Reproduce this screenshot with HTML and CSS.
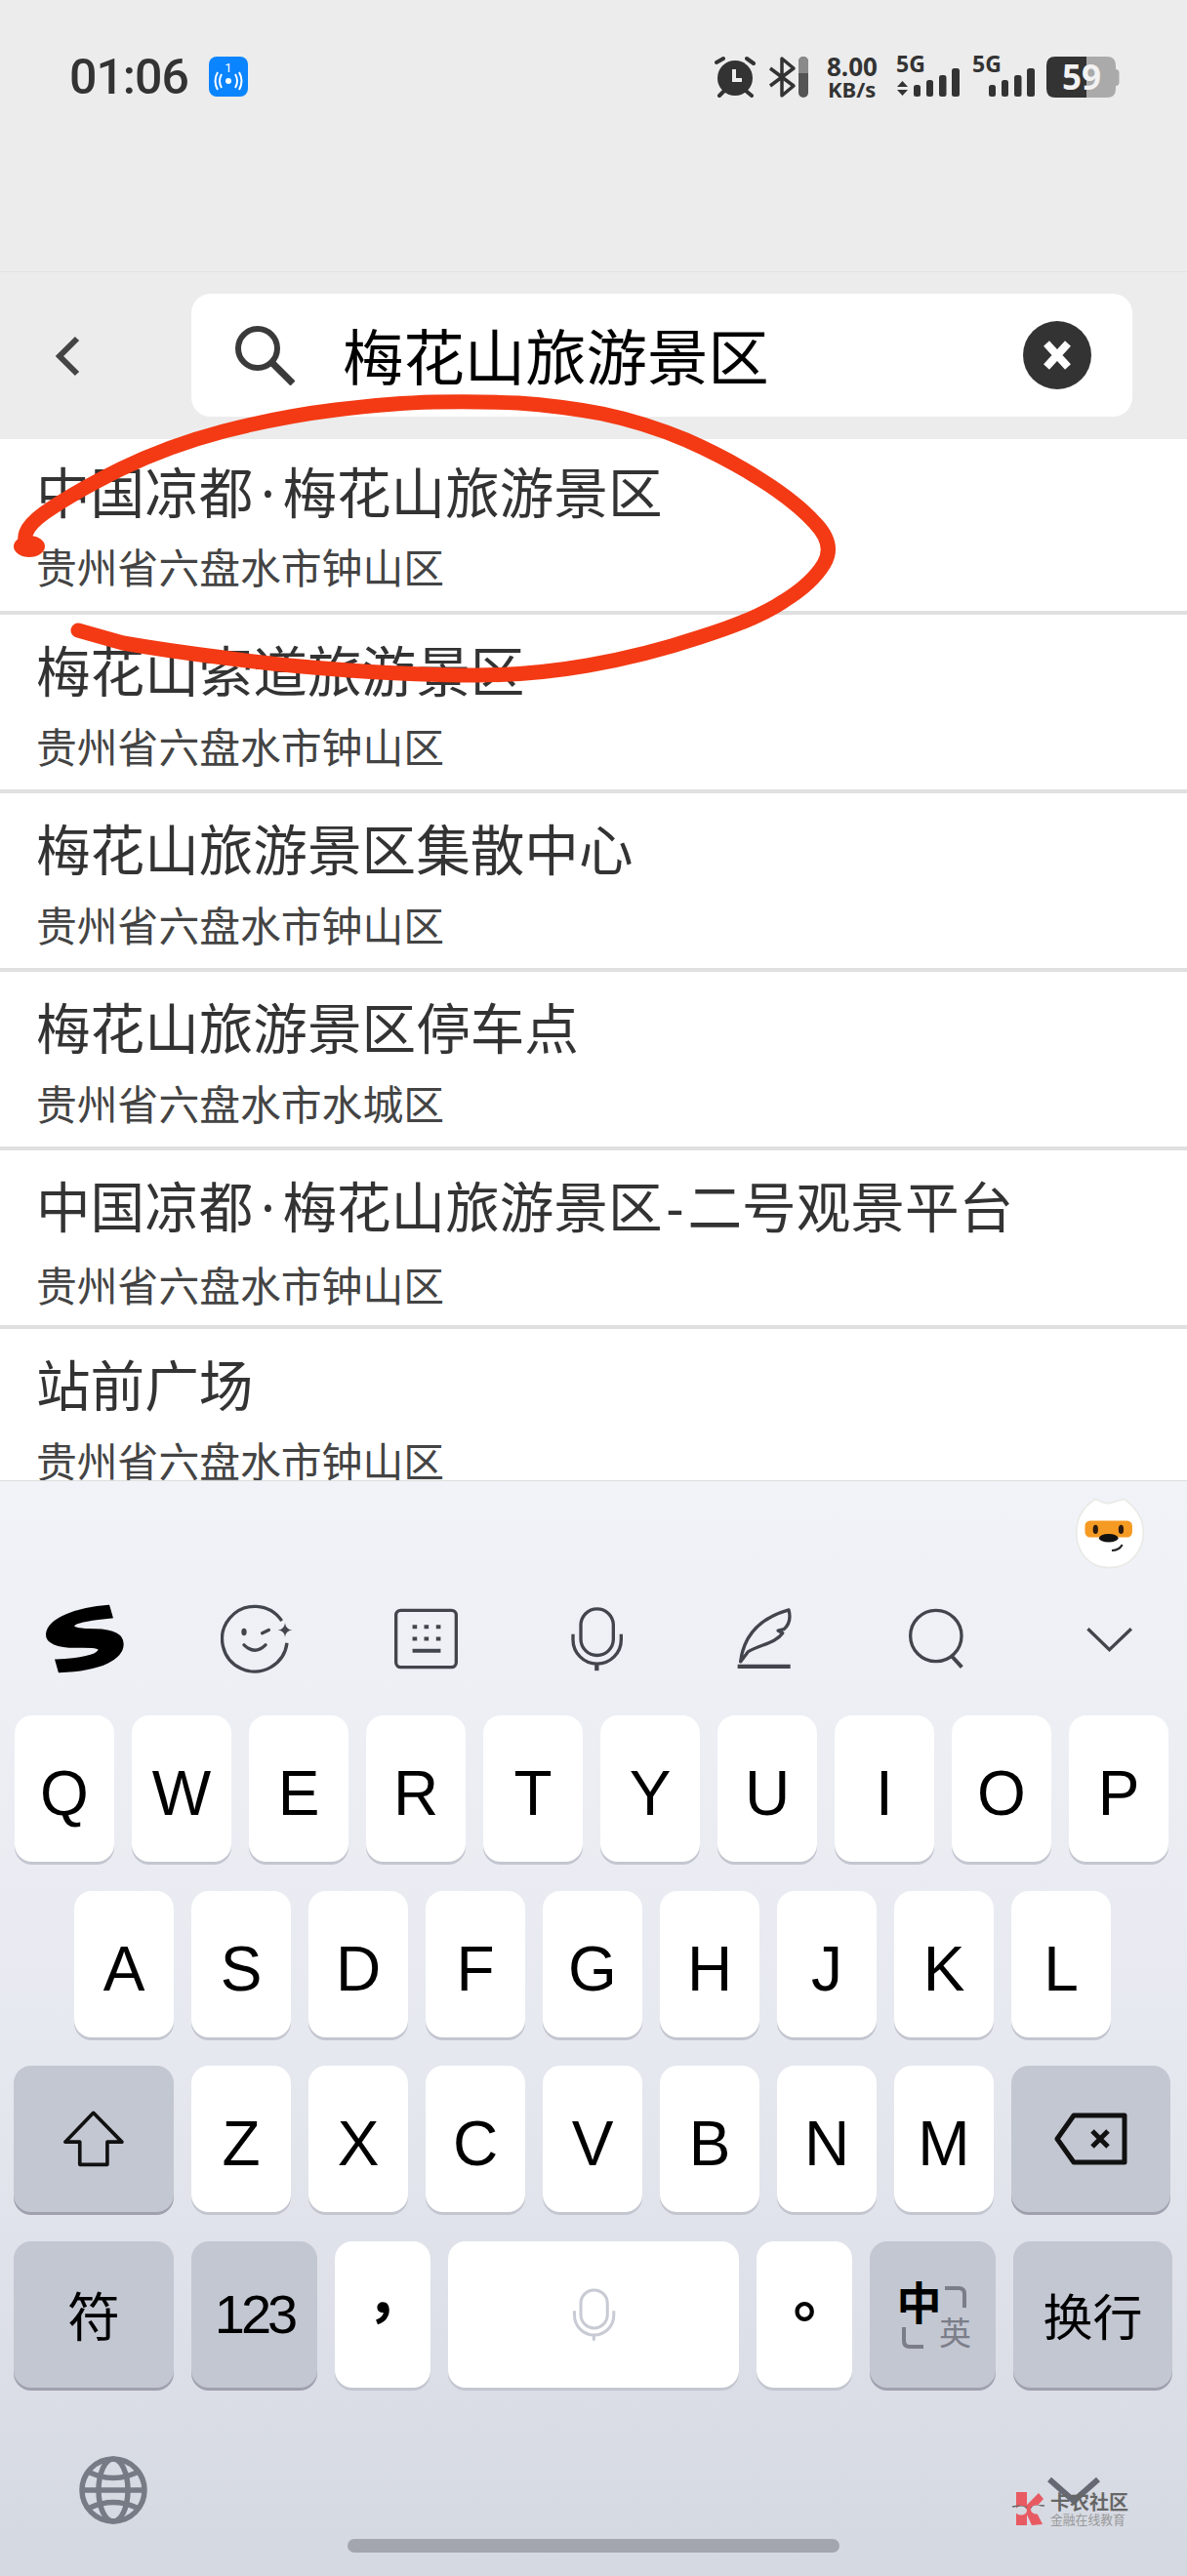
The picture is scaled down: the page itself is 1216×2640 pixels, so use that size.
FILE: index.html
```html
<!DOCTYPE html>
<html>
<head>
  <title>梅花山旅游景区</title>
  <link rel="stylesheet" href="styles.css">
</head>
<body>
  <div class="top">
    <div class="status">
      <span class="time">01:06</span>
      <svg class="nfc" viewBox="0 0 40 41">
        <rect width="40" height="41" rx="8" fill="#0a84ff"/>
        <text x="20" y="16" text-anchor="middle" font-size="13" font-family="Roboto" fill="#fff">1</text>
        <circle cx="20" cy="25" r="3" fill="#fff"/>
        <path d="M13 18Q9 25 13 32M27 18Q31 25 27 32M9 16Q4 25 9 34M31 16Q36 25 31 34" fill="none" stroke="#fff" stroke-width="2"/>
      </svg>
      <svg class="status-icons" viewBox="730 40 420 80">
        <!-- alarm -->
        <circle cx="753" cy="80" r="18" fill="#333"/>
        <path d="M752 71V82H760" fill="none" stroke="#ededed" stroke-width="4"/>
        <path d="M734 64L741 60M765 60L772 65M737 98L742 93M764 93L770 98" stroke="#333" stroke-width="4" stroke-linecap="round"/>
        <!-- bluetooth -->
        <path d="M789 88L813 70L801 60V98L813 88L789 70" fill="none" stroke="#333" stroke-width="3.500" stroke-linejoin="round"/>
        <rect x="818" y="58" width="10" height="42" rx="5" fill="#555"/>
        <path d="M818 75V63a5 5 0 0 1 10 0V75Z" fill="#8a8a8a"/>
        <!-- speed -->
        <text class="sb" x="847" y="78" font-size="26">8.00</text>
        <text class="sb" x="848" y="100" font-size="22">KB/s</text>
        <!-- sim 1 -->
        <text class="sb" x="918" y="74" font-size="23">5G</text>
        <path d="M924.500 83L930 89H919ZM924.500 98L930 92H919Z" fill="#333"/>
        <rect x="936" y="87" width="7" height="12" rx="2.500" fill="#333"/>
        <rect x="949" y="82" width="7" height="17" rx="2.500" fill="#333"/>
        <rect x="962" y="77" width="7.500" height="22" rx="2.500" fill="#333"/>
        <rect x="975" y="70" width="8" height="29" rx="2.500" fill="#333"/>
        <!-- sim 2 -->
        <text class="sb" x="996" y="74" font-size="23">5G</text>
        <rect x="1013" y="87" width="7" height="12" rx="2.500" fill="#333"/>
        <rect x="1026" y="82" width="7" height="17" rx="2.500" fill="#333"/>
        <rect x="1039" y="77" width="7.500" height="22" rx="2.500" fill="#333"/>
        <rect x="1052" y="70" width="8" height="29" rx="2.500" fill="#333"/>
        <!-- battery -->
        <path d="M1113 58H1134Q1143 58 1143 67V71Q1146.500 71 1146.500 75V84Q1146.500 88 1143 88V91Q1143 100 1134 100H1113Z" fill="#aaa"/>
        <path d="M1113 58H1081Q1072 58 1072 67V91Q1072 100 1081 100H1113Z" fill="#333"/>
        <text class="sb batt" x="1088" y="92" font-size="35">59</text>
      </svg>
    </div>
    <div class="searchbar">
      <svg class="back" viewBox="0 0 26 42"><path d="M23 3L5 21L23 39" fill="none" stroke="#444" stroke-width="6"/></svg>
      <div class="searchbox">
        <svg class="search-ico" viewBox="0 0 62 62"><circle cx="24" cy="24" r="20" fill="none" stroke="#3a3a3a" stroke-width="6"/><path d="M38 38L60 60" stroke="#3a3a3a" stroke-width="7"/></svg>
        <span class="query">梅花山旅游景区</span>
        <svg class="clear" viewBox="0 0 72 72"><circle cx="36" cy="36" r="35" fill="#333"/><path d="M25 24L47 48M47 24L25 48" stroke="#fff" stroke-width="8"/></svg>
      </div>
    </div>
  </div>

  <div class="results">
    <div class="row"><div class="title">中国凉都<span class="dot">·</span>梅花山旅游景区</div><div class="sub">贵州省六盘水市钟山区</div></div>
    <div class="row"><div class="title">梅花山索道旅游景区</div><div class="sub">贵州省六盘水市钟山区</div></div>
    <div class="row"><div class="title">梅花山旅游景区集散中心</div><div class="sub">贵州省六盘水市钟山区</div></div>
    <div class="row"><div class="title">梅花山旅游景区停车点</div><div class="sub">贵州省六盘水市水城区</div></div>
    <div class="row"><div class="title">中国凉都<span class="dot">·</span>梅花山旅游景区<span class="dash">-</span>二号观景平台</div><div class="sub">贵州省六盘水市钟山区</div></div>
    <div class="row"><div class="title">站前广场</div><div class="sub">贵州省六盘水市钟山区</div></div>
  </div>

  <div class="keyboard">
    <div class="mascot-row">
      <svg class="mascot" viewBox="600 40 220 225">
        <path d="M708 260C640 260 605 205 605 150C605 105 625 70 665 45C680 50 690 60 708 58C725 56 735 48 755 45C790 70 815 105 815 150C815 205 775 260 708 260Z" fill="#fff" stroke="#e9e9e6" stroke-width="5"/>
        <rect x="632" y="113" width="148" height="52" rx="16" fill="#f59a23"/>
        <ellipse cx="665" cy="140" rx="8" ry="14" fill="#2a1a10"/>
        <ellipse cx="745" cy="140" rx="8" ry="14" fill="#2a1a10"/>
        <ellipse cx="706" cy="167" rx="30" ry="13" fill="#111"/>
        <path d="M716 206Q738 206 749 188" fill="none" stroke="#222" stroke-width="6"/>
      </svg>
    </div>
    <div class="toolbar">
      <svg class="tool-s" viewBox="130 360 255 215"><path d="M332 368L342 403C300 408 235 412 224 428C218 438 250 440 290 441C340 442 375 455 375 485C375 530 310 565 180 570L170 535C210 533 290 528 302 505C308 492 270 494 230 494C175 494 140 480 142 455C146 405 240 375 332 368Z" fill="#000" stroke="#000" stroke-width="6"/></svg>
      <svg class="tool-face" viewBox="680 370 225 215" fill="none" stroke="#43454d" stroke-width="10">
        <path d="M868 424A100 100 0 1 0 884 492"/>
        <path d="M878 430Q880 450 900 452Q880 454 878 474Q876 454 856 452Q876 450 878 430Z" fill="#43454d" stroke="none"/>
        <ellipse cx="752" cy="458" rx="8" ry="11" fill="#43454d" stroke="none"/>
        <path d="M808 462L828 452M752 498Q785 530 818 498" stroke-linecap="round"/>
      </svg>
      <svg class="tool-kb" viewBox="1205 380 200 190">
        <rect x="1212" y="387" width="186" height="176" rx="15" fill="none" stroke="#43454d" stroke-width="10"/>
        <path d="M1263 438h14M1299 438h14M1336 438h14M1263 475h14M1299 475h14M1336 475h14" stroke="#43454d" stroke-width="12"/>
        <path d="M1263 512h87" stroke="#43454d" stroke-width="12"/>
      </svg>
      <svg class="tool-mic" viewBox="310 375 165 200" fill="none" stroke="#43454d" stroke-width="10">
        <rect x="343" y="383" width="100" height="143" rx="50"/>
        <path d="M319 461V478A74 74 0 0 0 467 478V461"/>
        <path d="M392 552V573" stroke-width="13"/>
      </svg>
      <svg class="tool-pen" viewBox="822 375 172 195" fill="none" stroke="#43454d" stroke-width="10" stroke-linejoin="round">
        <path d="M836 543C845 470 890 410 985 383C992 410 985 430 970 443L952 447L966 455C945 485 900 490 860 512Z"/>
        <path d="M827 558H990" stroke-width="13"/>
      </svg>
      <svg class="tool-search" viewBox="85 378 175 188" fill="none" stroke="#43454d" stroke-width="10">
        <circle cx="172" cy="463" r="79"/>
        <path d="M222 527L252 560" stroke-width="12"/>
      </svg>
      <svg class="tool-down" viewBox="638 432 148 82"><path d="M645 442L712 507L780 442" fill="none" stroke="#43454d" stroke-width="10"/></svg>
    </div>

    <div class="keys row-1">
      <div class="key">Q</div><div class="key">W</div><div class="key">E</div><div class="key">R</div><div class="key">T</div>
      <div class="key">Y</div><div class="key">U</div><div class="key">I</div><div class="key">O</div><div class="key">P</div>
    </div>
    <div class="keys row-2">
      <div class="key">A</div><div class="key">S</div><div class="key">D</div><div class="key">F</div><div class="key">G</div>
      <div class="key">H</div><div class="key">J</div><div class="key">K</div><div class="key">L</div>
    </div>
    <div class="keys row-3">
      <div class="key fn w164">
        <svg class="shift" viewBox="195 188 195 175"><path d="M290 195L378 285H333V355H248V285H203Z" fill="none" stroke="#111" stroke-width="11" stroke-linejoin="round"/></svg>
      </div>
      <div class="key">Z</div><div class="key">X</div><div class="key">C</div><div class="key">V</div><div class="key">B</div><div class="key">N</div><div class="key">M</div>
      <div class="key fn w163">
        <svg class="del" viewBox="1078 2163 76 56"><path d="M1098 2167H1150V2215H1098L1081 2191Z" fill="none" stroke="#111" stroke-width="5" stroke-linejoin="round"/><path d="M1117 2183L1133 2199M1133 2183L1117 2199" stroke="#111" stroke-width="5"/></svg>
      </div>
    </div>
    <div class="keys row-4">
      <div class="key fn w164 cjk">符</div>
      <div class="key fn w129 num">123</div>
      <div class="key w98 punct">，</div>
      <div class="key w298">
        <svg class="space-mic" viewBox="310 375 165 200" fill="none" stroke="#c8cad4" stroke-width="11">
          <rect x="343" y="383" width="100" height="143" rx="50"/>
          <path d="M319 461V478A74 74 0 0 0 467 478V461"/>
          <path d="M392 552V573"/>
        </svg>
      </div>
      <div class="key w98 punct">。</div>
      <div class="key fn w129">
        <div class="lang">
          <span class="lang-zh">中</span>
          <svg class="corner" viewBox="0 0 22 22"><path d="M0 2H14Q20 2 20 8V22" fill="none" stroke="#7b7e89" stroke-width="4"/></svg>
          <svg class="corner corner-low" viewBox="0 0 22 22"><path d="M2 0V14Q2 20 8 20H22" fill="none" stroke="#7b7e89" stroke-width="4"/></svg>
          <span class="lang-en">英</span>
        </div>
      </div>
      <div class="key fn w163 enter">换行</div>
    </div>

    <div class="kb-bottom">
      <svg class="globe" viewBox="0 0 70 70" fill="none" stroke="#777b85" stroke-width="5.500">
        <circle cx="35" cy="35" r="32"/>
        <ellipse cx="35" cy="35" rx="15" ry="32"/>
        <path d="M3 35H67M11 17Q35 28 59 17M11 53Q35 42 59 53" />
      </svg>
      <svg class="hide" viewBox="0 0 56 28"><path d="M3 3L28 25L53 3" fill="none" stroke="#666974" stroke-width="6"/></svg>
    </div>
    <div class="homebar"></div>
  </div>

  <!-- scribble drawn on top of the screenshot -->
  <svg class="scribble" viewBox="0 400 1216 310">
    <path d="M32 562Q15 548 45 526Q75 505 123 481Q172 457 229 442Q287 427 344 420Q402 413 445 412Q488 411 531 413Q574 416 617 424Q660 433 703 451Q746 470 780 492Q815 514 835 536Q856 558 844 578Q832 598 803 616Q775 635 717 653Q660 672 602 682Q545 692 487 692Q430 692 358 687Q287 682 229 674Q172 667 126 659L80 646" fill="none" stroke="#f33a14" stroke-width="15" stroke-linecap="round" stroke-linejoin="round"/>
    <ellipse cx="30" cy="560" rx="16" ry="11" fill="#f33a14"/>
  </svg>

  <!-- forum watermark -->
  <div class="watermark">
    <svg class="wm-logo" viewBox="0 0 36 36">
      <path d="M5 1H16V14L28 2L33 8L24 18L32 34L21 35L16 24V35H5Z" fill="#e85a62"/>
      <path d="M1 16Q9 14 16 17M20 17Q27 14 34 15" fill="none" stroke="#666" stroke-width="1.500"/>
      <ellipse cx="10" cy="20" rx="6" ry="4.500" fill="#d6d9e0"/>
      <ellipse cx="26" cy="19" rx="6" ry="4.500" fill="#d6d9e0"/>
    </svg>
    <div class="wm-text">
      <div class="wm-name">卡农社区</div>
      <div class="wm-sub">金融在线教育</div>
    </div>
  </div>
</body>
</html>
```

FILE: styles.css
```css
html, body {
  margin: 0;
  padding: 0;
}
body {
  position: relative;
  width: 1216px;
  height: 2640px;
  overflow: hidden;
  display: flex;
  flex-direction: column;
  background: #fff;
  font-family: "Noto Sans CJK SC", "Noto Sans", sans-serif;
}
svg {
  display: block;
}

/* top area */
.top {
  flex: none;
  height: 450px;
  background: #ececec;
}
.status {
  height: 279px;
  box-sizing: border-box;
  padding: 58px 66px 0 71px;
  display: flex;
  align-items: flex-start;
  border-bottom: 1px solid #e2e2e2;
}
.time {
  font-family: Roboto, sans-serif;
  font-weight: 500;
  font-size: 50px;
  letter-spacing: -1px;
  line-height: 42px;
  color: #333;
}
.nfc {
  width: 40px;
  height: 41px;
  margin-left: 21px;
}
.status-icons {
  width: 420px;
  height: 80px;
  margin: -18px 0 0 auto;
}
.sb {
  font-family: "Noto Sans", sans-serif;
  font-weight: 700;
  fill: #333;
}
.batt {
  fill: #f2f2f2;
}
.searchbar {
  height: 171px;
  display: flex;
  align-items: center;
  padding: 0 56px;
}
.back {
  width: 26px;
  height: 42px;
  margin-right: 114px;
}
.searchbox {
  flex: 1;
  height: 126px;
  margin-top: -2px;
  display: flex;
  align-items: center;
  padding: 0 41px 0 44px;
  background: #fff;
  border-radius: 20px;
}
.search-ico {
  width: 62px;
  height: 62px;
}
.query {
  margin-left: 49px;
  padding-bottom: 2px;
  font-size: 62.400px;
  color: #000;
}
.clear {
  width: 72px;
  height: 72px;
  margin-left: auto;
}

/* result list */
.results {
  flex: 1;
  min-height: 0;
  overflow: hidden;
  background: #fff;
}
.row {
  height: 183px;
  box-sizing: border-box;
  padding: 19px 0 0 37px;
  border-bottom: 4px solid #e0e0e0;
}
.row:first-child {
  height: 180px;
  padding-top: 16px;
}
.row:first-child .sub {
  margin-top: 11px;
}
.title {
  font-size: 55.600px;
  line-height: 72px;
  color: #333;
}
.dot, .dash {
  display: inline-block;
  text-align: center;
  font-family: "Noto Sans", sans-serif;
}
.dot { width: 30px; }
.dash { width: 26px; }
.sub {
  margin-top: 15px;
  font-size: 41.800px;
  line-height: 56px;
  color: #444;
}

/* keyboard */
.keyboard {
  flex: none;
  height: 1123px;
  box-sizing: border-box;
  padding-top: 16px;
  background: linear-gradient(#f1f3f8, #e7e9f0 50%, #d4d8e1);
  border-top: 1px solid #dcdcdc;
}
.mascot-row {
  display: flex;
  justify-content: flex-end;
  height: 75px;
  padding-right: 43px;
}
.mascot {
  width: 72px;
  height: 75px;
}
.toolbar {
  height: 116px;
  margin: 12px 0 0 -1px;
  display: grid;
  grid-template-columns: repeat(7, 175px);
  justify-items: center;
  align-items: center;
}
.tool-s { width: 85px; height: 72px; }
.tool-face { width: 75px; height: 72px; margin-left: 4px; }
.tool-kb { width: 67px; height: 63px; }
.tool-mic { width: 55px; height: 67px; }
.tool-pen { width: 57px; height: 65px; margin-right: 8px; }
.tool-search { width: 58px; height: 63px; margin-right: 6px; }
.tool-down { width: 49px; height: 27px; }

.keys {
  display: flex;
  gap: 18px;
  height: 150px;
  margin-bottom: 29.500px;
}
.toolbar + .keys {
  margin-top: 21px;
}
.row-1 { padding-left: 15px; }
.row-2 { padding-left: 76px; }
.row-3, .row-4 { padding-left: 14px; }
.key {
  flex: none;
  box-sizing: border-box;
  width: 102px;
  height: 150px;
  padding-top: 10px;
  display: flex;
  align-items: center;
  justify-content: center;
  background: #fff;
  border-radius: 18px;
  box-shadow: 0 3px 0 #c3c6cf;
  font-family: "Liberation Sans", sans-serif;
  font-size: 64px;
  color: #000;
}
.fn {
  background: #c3c7d2;
  box-shadow: 0 3px 0 #9fa2ae;
  padding-top: 0;
}
.w98 { width: 98px; }
.w129 { width: 129px; }
.w163 { width: 163px; }
.w164 { width: 164px; }
.w298 { width: 298px; padding-top: 0; }
.shift { width: 65px; height: 58px; }
.del { width: 76px; height: 56px; }
.cjk {
  font-family: "Noto Sans CJK SC", sans-serif;
  font-size: 54px;
}
.enter {
  font-family: "Noto Sans CJK SC", sans-serif;
  font-size: 51px;
}
.num {
  font-size: 56px;
  letter-spacing: -4px;
  font-family: "Liberation Sans", sans-serif;
}
.punct {
  font-family: "Noto Sans CJK TC", sans-serif;
  font-weight: 700;
  font-size: 60px;
  padding: 0 0 12px;
}
.space-mic {
  width: 45px;
  height: 56px;
}
.lang {
  display: grid;
  grid-template-columns: 46px 36px;
  grid-template-rows: 48px 36px;
  align-items: center;
  justify-items: center;
}
.lang-zh {
  align-self: start;
  margin: 3px 0 0 8px;
  font-family: "Noto Sans CJK SC", sans-serif;
  font-weight: 700;
  font-size: 46px;
  line-height: 48px;
}
.lang-en {
  align-self: start;
  margin-top: -7px;
  font-family: "Noto Sans CJK SC", sans-serif;
  font-size: 33px;
  line-height: 36px;
  color: #7b7e89;
}
.corner {
  width: 22px;
  height: 22px;
}
.corner-low {
  margin-right: 6px;
}
.kb-bottom {
  margin-top: 70.500px;
  padding: 0 88px 0 81px;
  height: 69px;
  display: flex;
  align-items: center;
  justify-content: space-between;
}
.globe { width: 70px; height: 70px; }
.hide { width: 56px; height: 28px; }
.homebar {
  width: 504px;
  height: 14px;
  margin: 16px auto 0;
  background: #a3a6ae;
  border-radius: 7px;
}

/* things lying over the page */
.scribble {
  position: absolute;
  left: 0;
  top: 400px;
  width: 1216px;
  height: 310px;
}
.watermark {
  position: absolute;
  left: 1036px;
  top: 2553px;
  display: flex;
  gap: 3px;
}
.wm-logo {
  width: 36px;
  height: 36px;
}
.wm-text {
  padding-left: 1px;
}
.wm-name {
  font-size: 20px;
  line-height: 22px;
  font-weight: 700;
  color: #666;
}
.wm-sub {
  font-size: 12.800px;
  line-height: 14px;
  color: #999;
}
```
